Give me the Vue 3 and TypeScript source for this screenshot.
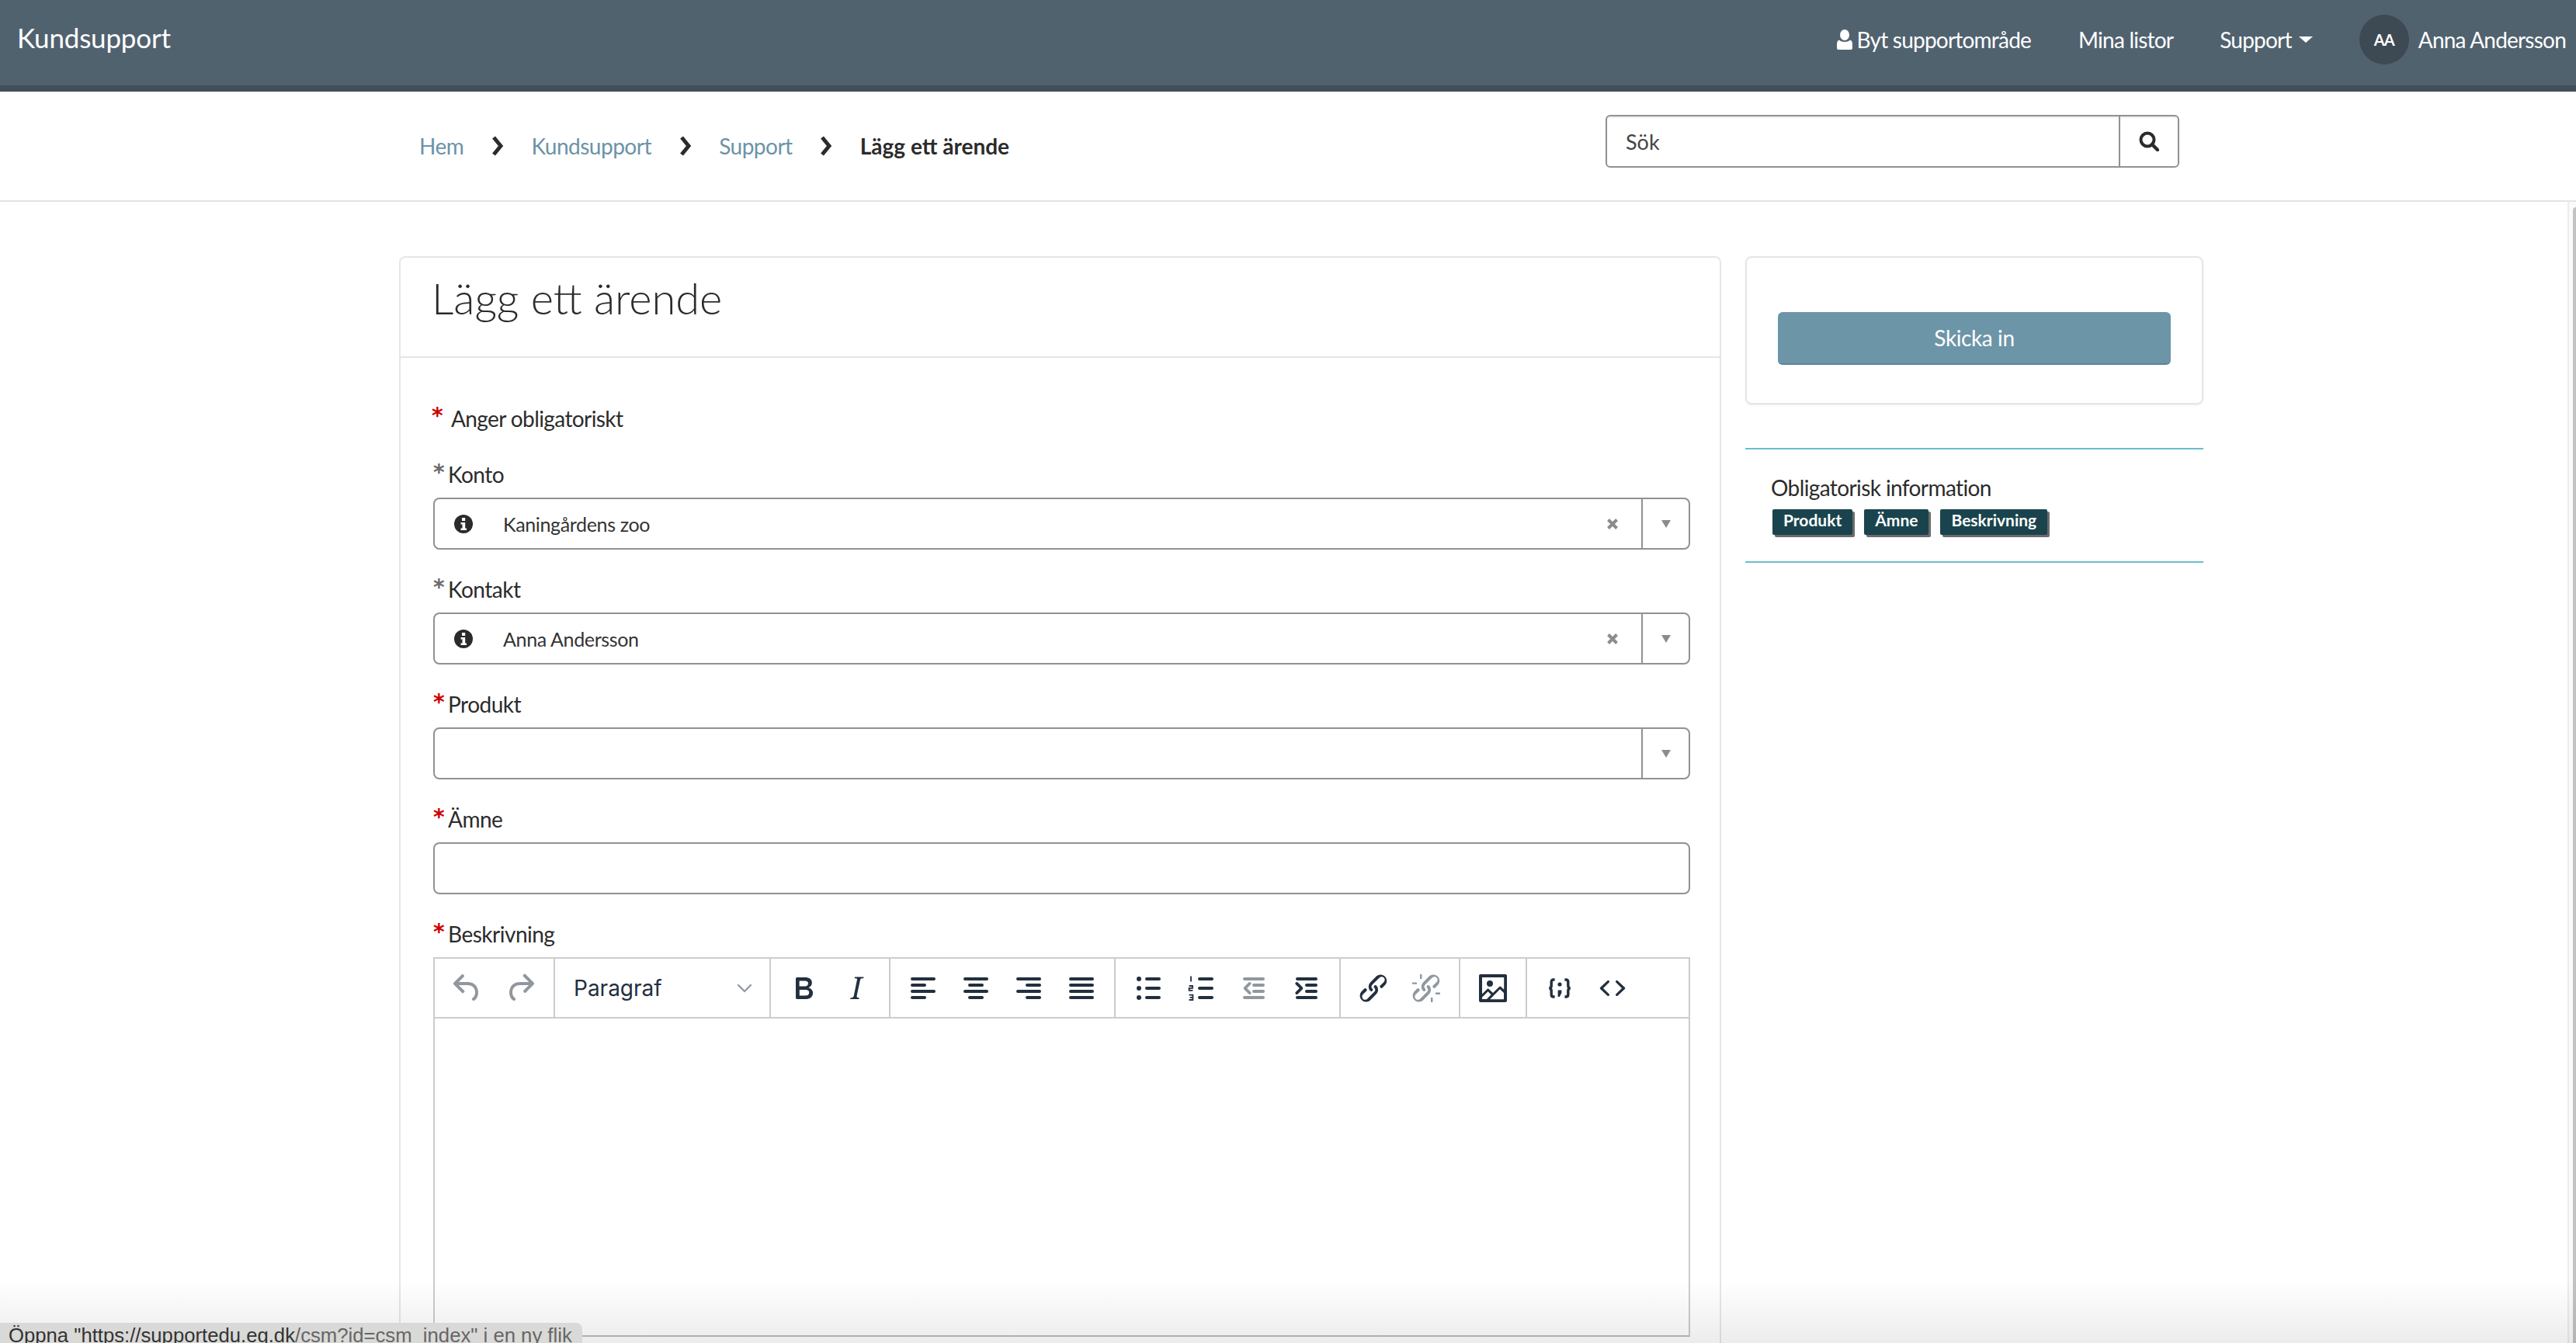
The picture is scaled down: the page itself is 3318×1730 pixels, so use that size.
<script setup lang="ts">
interface Icon { d?: string; muted?: boolean; kind?: string }
const bar = (x: number, y: number, w: number) => `M${x + 1} ${y}h${w - 2}a1 1 0 0 1 0 2H${x + 1}a1 1 0 0 1 0-2z`
const dot = (x: number, y: number) => `M${x} ${y}a1.5 1.5 0 1 1 3 0a1.5 1.5 0 1 1-3 0z`
const undo = 'M6.4 8H12c3.7 0 6.2 2 6.8 5.1.6 2.7-.4 5.6-2.3 6.8a1 1 0 0 1-1-1.8c1.1-.6 1.8-2.7 1.4-4.6-.5-2.1-2.1-3.5-4.9-3.5H6.4l3.3 3.3a1 1 0 1 1-1.4 1.4l-5-5a1 1 0 0 1 0-1.4l5-5a1 1 0 0 1 1.4 1.4L6.4 8z'
const redo = 'M17.6 10H12c-2.8 0-4.4 1.4-4.9 3.5-.4 2 .3 4 1.4 4.6a1 1 0 1 1-1 1.8c-2-1.2-2.9-4.1-2.3-6.8.6-3 3-5.1 6.8-5.1h5.6l-3.3-3.3a1 1 0 1 1 1.4-1.4l5 5a1 1 0 0 1 0 1.4l-5 5a1 1 0 0 1-1.4-1.4l3.3-3.3z'
const bold = 'M7.8 19c-.3 0-.5 0-.6-.2l-.2-.5V5.7c0-.2 0-.4.2-.5l.6-.2h5c1.5 0 2.7.3 3.5 1 .7.6 1.1 1.4 1.1 2.5a3 3 0 0 1-.6 1.9c-.4.6-1 1-1.6 1.2.4.1.9.3 1.3.6s.8.7 1 1.2c.4.4.5 1 .5 1.6 0 1.3-.4 2.3-1.3 3-.8.7-2.1 1-3.8 1H7.8zm5-8.3c.6 0 1.2-.1 1.6-.5.4-.3.6-.7.6-1.3 0-1.1-.8-1.7-2.3-1.7H9.3v3.5h3.4zm.5 6c.7 0 1.3-.1 1.7-.4.4-.4.6-.9.6-1.5s-.2-1-.7-1.4c-.4-.3-1-.4-2-.4H9.4v3.8h4z'
const italic = 'M16.7 4.7l-.1.9h-.3c-.6 0-1 0-1.4.3-.3.3-.4.6-.5 1.1l-2.1 9.8v.6c0 .5.4.8 1.4.8h.2l-.2.8H8l.2-.8h.2c1.1 0 1.8-.5 2-1.5l2-9.8.1-.5c0-.6-.4-.8-1.4-.8h-.3l.2-.9h5.8z'
const link = 'M6.2 12.3a1 1 0 0 1 1.4 1.4l-2.1 2.1a2 2 0 1 0 2.8 2.8l4.2-4.2a2 2 0 0 0 0-2.8 1 1 0 0 1 1.4-1.4 4 4 0 0 1 0 5.6l-4.2 4.2a4 4 0 0 1-5.6-5.6l2-2.1zm11.6-.6a1 1 0 0 1-1.4-1.4l2.1-2.1a2 2 0 1 0-2.8-2.8L11.4 9.6a2 2 0 0 0 0 2.8 1 1 0 0 1-1.4 1.4 4 4 0 0 1 0-5.6l4.2-4.2a4 4 0 0 1 5.6 5.6l-2 2.1z'
const unlinkTicks = 'M8 3v3h1.2V3zM3 8.2v1.2h3V8.2zM15 18v3h1.2v-3zM18 14.8V16h3v-1.2z'
const image = 'M5 15.7l3.3-3.2c.3-.3.7-.3 1 0L12 15l4.1-4c.3-.4.8-.4 1 0l2 1.9V5H5v10.7zM5 18V19h3l2.8-2.9-2-2L5 17.9zm14-3l-2.5-2.4-6.4 6.5H19v-4zM4 3h16c.6 0 1 .4 1 1v16c0 .6-.4 1-1 1H4a1 1 0 0 1-1-1V4c0-.6.4-1 1-1zm6 8a2 2 0 1 0 0-4 2 2 0 0 0 0 4z'
const source = 'M9.8 15.7c.3.3.3.8 0 1-.3.4-.9.4-1.2 0l-4.4-4.1a.8.8 0 0 1 0-1.2l4.4-4.2c.3-.3.9-.3 1.2 0 .3.3.3.8 0 1.1L6 12l3.8 3.7zm4.4 0c-.3.3-.3.8 0 1 .3.4.9.4 1.2 0l4.4-4.1a.8.8 0 0 0 0-1.2l-4.4-4.2a.8.8 0 0 0-1.2 0c-.3.3-.3.8 0 1.1L18 12l-3.8 3.7z'

const alignLeft = bar(4, 5, 16) + bar(4, 9, 10) + bar(4, 13, 16) + bar(4, 17, 10)
const alignCenter = bar(4, 5, 16) + bar(7, 9, 10) + bar(4, 13, 16) + bar(7, 17, 10)
const alignRight = bar(4, 5, 16) + bar(10, 9, 10) + bar(4, 13, 16) + bar(10, 17, 10)
const justify = bar(4, 5, 16) + bar(4, 9, 16) + bar(4, 13, 16) + bar(4, 17, 16)
const bullets = bar(10, 5, 10) + bar(10, 11, 10) + bar(10, 17, 10) + dot(4.5, 6) + dot(4.5, 12) + dot(4.5, 18)
const numbers = bar(10, 5, 10) + bar(10, 11, 10) + bar(10, 17, 10)
const outdent = bar(5, 5, 14) + bar(11, 9, 8) + bar(11, 13, 8) + bar(5, 17, 14) + 'M8.7 8.3a.9.9 0 0 1 1.3 1.3L7.6 12l2.4 2.4a.9.9 0 0 1-1.3 1.3l-3-3a1 1 0 0 1 0-1.4z'
const indent = bar(5, 5, 14) + bar(11, 9, 8) + bar(11, 13, 8) + bar(5, 17, 14) + 'M6.3 8.3a.9.9 0 0 0-1.3 1.3L7.4 12 5 14.4a.9.9 0 0 0 1.3 1.3l3-3a1 1 0 0 0 0-1.4z'

const groups: { pad: string; icons: Icon[] }[] = [
  { pad: 'first', icons: [{ d: undo, muted: true }, { d: redo, muted: true }] },
  { pad: 'format', icons: [] },
  { pad: 'std', icons: [{ d: bold }, { d: italic }] },
  { pad: 'std', icons: [{ d: alignLeft }, { d: alignCenter }, { d: alignRight }, { d: justify }] },
  { pad: 'std', icons: [{ d: bullets }, { d: numbers, kind: 'num' }, { d: outdent, muted: true }, { d: indent }] },
  { pad: 'std', icons: [{ d: link }, { d: link + unlinkTicks, muted: true }] },
  { pad: 'std', icons: [{ d: image }] },
  { pad: 'last', icons: [{ kind: 'code' }, { d: source }] },
]
const crumbs = ['Hem', 'Kundsupport', 'Support']
const fields = [
  { label: 'Konto', value: 'Kaningårdens zoo', required: false, type: 'select' },
  { label: 'Kontakt', value: 'Anna Andersson', required: false, type: 'select' },
  { label: 'Produkt', value: '', required: true, type: 'select' },
  { label: 'Ämne', value: '', required: true, type: 'text' },
]
const badges = ['Produkt', 'Ämne', 'Beskrivning']
</script>

<template>
  <div class="page">
    <header class="topbar">
      <span class="brand">Kundsupport</span>
      <nav class="nav">
        <span class="nav-item switch">
          <svg class="user" viewBox="0 0 20 26" aria-hidden="true">
            <ellipse cx="10" cy="7" rx="6" ry="7" fill="#fff" />
            <path d="M3 13.5c2 1.8 4.2 2.5 7 2.5s5-.7 7-2.5c2 .6 3 2.400 3 5.500v5c0 1.200-.8 2-2 2H2c-1.200 0-2-.8-2-2v-5c0-3.100 1-4.900 3-5.500z" fill="#fff" />
          </svg>
          Byt supportområde
        </span>
        <span class="nav-item lists">Mina listor</span>
        <span class="nav-item support">Support<i class="nav-caret"></i></span>
        <span class="avatar">AA</span>
        <span class="nav-item name">Anna Andersson</span>
      </nav>
    </header>

    <div class="crumbbar">
      <ol class="crumbs">
        <template v-for="c in crumbs" :key="c">
          <li class="crumb-link">{{ c }}</li>
          <li class="chev">
            <svg width="16" height="26" viewBox="0 0 16 26" aria-hidden="true">
              <path d="M3 2l9 11-9 11" fill="none" stroke="#2b2b2b" stroke-width="5" />
            </svg>
          </li>
        </template>
        <li class="crumb-current">Lägg ett ärende</li>
      </ol>
      <div class="search">
        <span class="search-input">Sök</span>
        <span class="search-btn">
          <svg width="26" height="26" viewBox="0 0 26 26" aria-hidden="true">
            <circle cx="11" cy="11" r="8.500" fill="none" stroke="#2b2b2b" stroke-width="4" />
            <path d="M17 17l7 7" stroke="#2b2b2b" stroke-width="4.500" stroke-linecap="round" />
          </svg>
        </span>
      </div>
    </div>

    <div class="content">
      <main class="card">
        <h1 class="title">Lägg ett ärende</h1>
        <div class="form">
          <p class="hint"><span class="hint-star">*</span>Anger obligatoriskt</p>
          <div v-for="f in fields" :key="f.label" class="field">
            <label class="label"><span class="star" :class="{ red: f.required }">*</span>{{ f.label }}</label>
            <div class="box">
              <div class="box-main">
                <svg v-if="f.value" class="info" viewBox="0 0 24 24" aria-hidden="true">
                  <circle cx="12" cy="12" r="12" fill="#2b2b2b" />
                  <rect x="10" y="4" width="4.200" height="4" fill="#fff" />
                  <path d="M8.500 10h5.700v7.500H16V20H8.500v-2.500h2V12.500h-2z" fill="#fff" />
                </svg>
                <span class="value">{{ f.value }}</span>
                <svg v-if="f.value" class="clear" viewBox="0 0 16 16" aria-hidden="true">
                  <path d="M2.500 2.500l11 11M13.500 2.500l-11 11" stroke="#8c8c8c" stroke-width="4" />
                </svg>
              </div>
              <div v-if="f.type === 'select'" class="box-arrow"><i class="tri"></i></div>
            </div>
          </div>

          <div class="field-editor">
            <label class="label"><span class="star red">*</span>Beskrivning</label>
            <div class="editor">
              <div class="toolbar">
                <div v-for="(g, gi) in groups" :key="gi" class="tgroup" :class="g.pad">
                  <template v-if="g.pad === 'format'">
                    <span class="format-name">Paragraf</span>
                    <svg width="20" height="12" viewBox="0 0 20 12" aria-hidden="true">
                      <path d="M2 2l8 8 8-8" fill="none" stroke="#222f3e" stroke-opacity=".5" stroke-width="2.200" stroke-linecap="round" />
                    </svg>
                  </template>
                  <span v-for="(ic, ii) in g.icons" :key="ii" class="tbtn">
                    <svg width="48" height="48" viewBox="0 0 24 24" aria-hidden="true">
                      <path v-if="ic.d" :d="ic.d" fill="#222f3e" :fill-opacity="ic.muted ? 0.5 : 1" fill-rule="evenodd" />
                      <path v-if="ic.kind === 'num'" d="M5.500 4.200v3.600M4.300 10.500h2.200v1.400H4.300v1.500h2.400M4.300 16.300h2.400v3.200H4.300M4.800 17.900h1.900" fill="none" stroke="#222f3e" stroke-width=".9" />
                      <template v-if="ic.kind === 'code'">
                        <path d="M8.800 6.500H8c-.9 0-1.400.5-1.400 1.400v2.600c0 .8-.4 1.300-1.300 1.500.9.200 1.300.7 1.300 1.500v2.600c0 .9.500 1.400 1.400 1.400h.8M15.200 6.500h.8c.9 0 1.400.5 1.400 1.400v2.600c0 .8.400 1.300 1.300 1.500-.9.200-1.300.7-1.300 1.500v2.600c0 .9-.5 1.400-1.400 1.400h-.8" fill="none" stroke="#222f3e" stroke-width="1.700" />
                        <circle cx="12" cy="9.500" r="1.300" fill="#222f3e" />
                        <path d="M10.800 13.300h2.400v1.700l-1.300 2.500h-1.100z" fill="#222f3e" />
                      </template>
                    </svg>
                  </span>
                </div>
              </div>
              <div class="editor-body"></div>
            </div>
          </div>
        </div>
      </main>

      <aside class="side">
        <div class="submit-card">
          <button class="submit" type="button">Skicka in</button>
        </div>
        <div class="mandatory">
          <p class="mandatory-title">Obligatorisk information</p>
          <div class="badges">
            <span v-for="b in badges" :key="b" class="badge">{{ b }}</span>
          </div>
        </div>
      </aside>
    </div>

    <div class="scrollbar"><div class="thumb"></div></div>
    <div class="fade"></div>
    <div class="status">Öppna "https://supportedu.eg.dk<span class="status-dim">/csm?id=csm_index" i en ny flik</span></div>
  </div>
</template>

<style scoped>
.page {
  position: relative;
  height: 1730px;
  overflow: hidden;
  background: #fff;
  font-family: Lato, "Open Sans", sans-serif;
  color: #2b2b2b;
}
.topbar {
  height: 118px;
  box-sizing: border-box;
  border-bottom: 8px solid #414f5a;
  background: #51626f;
  display: flex;
  align-items: center;
  justify-content: space-between;
  padding: 0 13px 0 22px;
  color: #fff;
}
.brand { font-size: 35px; margin-top: -14px; letter-spacing: -.2px; }
.nav { display: flex; align-items: center; font-size: 28px; letter-spacing: -.78px; margin-top: -9px; }
.nav-item { display: flex; align-items: center; white-space: nowrap; }
.user { width: 20px; height: 26px; margin-right: 6px; }
.lists { margin-left: 61px; }
.support { margin-left: 60px; }
.nav-caret {
  display: block;
  margin-left: 9px;
  border-style: solid;
  border-width: 8px 9px 0;
  border-color: #fff transparent transparent;
}
.avatar {
  width: 64px;
  height: 64px;
  border-radius: 50%;
  background: #3d4a54;
  margin-left: 60px;
  margin-right: 12px;
  display: flex;
  align-items: center;
  justify-content: center;
  font-size: 20px;
  font-weight: 700;
}
.crumbbar {
  height: 142px;
  box-sizing: border-box;
  border-bottom: 2px solid #dee5e8;
  display: flex;
  justify-content: space-between;
  align-items: flex-start;
  padding: 30px 511px 0 540px;
}
.crumbs {
  list-style: none;
  display: flex;
  align-items: center;
  margin: 0;
  padding: 0;
  height: 80px;
  font-size: 28px;
}
.crumb-link { color: #6b93a7; letter-spacing: -.5px; }
.chev { display: flex; margin: 0 35.6px; }
.crumb-current { font-weight: 700; }
.search {
  width: 739px;
  height: 68px;
  box-sizing: border-box;
  border: 2px solid #919191;
  border-radius: 6px;
  display: flex;
  box-shadow: inset 0 2px 2px rgba(0, 0, 0, .07);
}
.search-input {
  flex: 1;
  padding-left: 24px;
  display: flex;
  align-items: center;
  font-size: 27px;
  color: #444;
}
.search-btn {
  width: 74px;
  border-left: 2px solid #919191;
  display: flex;
  align-items: center;
  justify-content: center;
}
.content {
  display: flex;
  gap: 31px;
  padding: 70px 0 0 514px;
}
.card {
  width: 1703px;
  flex: none;
  box-sizing: border-box;
  height: 1500px;
  border: 2px solid #e3e7e9;
  border-radius: 8px;
}
.title {
  margin: 0;
  height: 129px;
  box-sizing: border-box;
  padding: 16px 0 0 40px;
  border-bottom: 2px solid #e3e7e9;
  font-size: 56px;
  font-weight: 300;
  line-height: 72px;
}
.form { padding: 0 38px 0 42px; }
.hint {
  margin: 0;
  height: 136px;
  padding-top: 56px;
  box-sizing: border-box;
  font-size: 28px;
  letter-spacing: -.6px;
  line-height: 44px;
  display: flex;
}
.hint-star {
  font-family: "DejaVu Sans", sans-serif;
  color: #c00;
  font-weight: 700;
  font-size: 28px;
  line-height: 38px;
  width: 25px;
  margin-left: -2px;
}
.label {
  display: flex;
  height: 44px;
  font-size: 28px;
  letter-spacing: -.5px;
  line-height: 28px;
}
.star {
  font-family: "DejaVu Sans", sans-serif;
  color: #6b6b6b;
  font-weight: 700;
  font-size: 28px;
  line-height: 24px;
  width: 19px;
}
.star.red { color: #c00; }
.field { margin-bottom: 37px; }
.box {
  height: 67px;
  box-sizing: border-box;
  border: 2px solid #919191;
  border-radius: 8px;
  display: flex;
}
.box-main {
  flex: 1;
  display: flex;
  align-items: center;
  padding-left: 25px;
  padding-right: 29px;
}
.info { width: 24px; height: 24px; margin-right: 39px; }
.value { flex: 1; font-size: 25px; letter-spacing: -.35px; color: #333; }
.clear { width: 16px; height: 16px; }
.box-arrow {
  width: 59px;
  border-left: 2px solid #919191;
  display: flex;
  align-items: center;
  justify-content: center;
}
.tri {
  display: block;
  border-style: solid;
  border-width: 10px 6px 0;
  border-color: #8c8c8c transparent transparent;
}
.editor {
  height: 489px;
  box-sizing: border-box;
  border: 2px solid #ccc;
  border-bottom-color: #bbb;
  display: flex;
  flex-direction: column;
}
.toolbar {
  height: 77px;
  box-sizing: border-box;
  border-bottom: 2px solid #ccc;
  display: flex;
}
.tgroup {
  display: flex;
  align-items: center;
  box-sizing: content-box;
  border-right: 2px solid #ccc;
  padding: 0 8px;
}
.tgroup.first { padding: 0 9px 0 8px; }
.tgroup.format {
  width: 278px;
  box-sizing: border-box;
  padding: 0 22px 0 24px;
  justify-content: space-between;
}
.tgroup.last { border-right: none; }
.format-name { font-family: Inter, sans-serif; font-size: 28px; color: #222f3e; }
.tbtn {
  width: 68px;
  height: 68px;
  display: flex;
  align-items: center;
  justify-content: center;
}
.editor-body { flex: 1; }
.side { width: 590px; flex: none; }
.submit-card {
  box-sizing: border-box;
  height: 191px;
  border: 2px solid #e3e7e9;
  border-radius: 8px;
  box-shadow: 0 1px 2px rgba(0, 0, 0, .08);
  display: flex;
  align-items: center;
  padding: 20px 40px 0;
}
.submit {
  flex: 1;
  height: 68px;
  border: none;
  border-bottom: 2px solid #5c8598;
  border-radius: 6px;
  background: #6d95a8;
  color: #fff;
  font-family: inherit;
  font-size: 28px;
  letter-spacing: -.4px;
}
.mandatory {
  margin-top: 56px;
  height: 148px;
  box-sizing: border-box;
  border-top: 2px solid #6cbdcd;
  border-bottom: 2px solid #6cbdcd;
  padding: 29px 0 0 33px;
}
.mandatory-title { margin: 0; font-size: 28px; letter-spacing: -.6px; line-height: 40px; }
.badges { display: flex; gap: 15px; margin-top: 8px; margin-left: 2px; }
.badge {
  box-sizing: border-box;
  height: 33px;
  padding: 0 14px;
  background: #1a444d;
  color: #fff;
  font-size: 21px;
  font-weight: 700;
  line-height: 27px;
  box-shadow: 3px 3px 0 #6b6b6b;
  border-radius: 2px;
}
.scrollbar {
  position: absolute;
  top: 260px;
  right: 0;
  bottom: 0;
  width: 11px;
  box-sizing: border-box;
  border-left: 2px solid #ececec;
  background: #fafafa;
  padding: 7px 0 0 5px;
}
.thumb { height: 100%; background: #c2c2c2; border-radius: 4px 0 0 0; }
.fade {
  position: absolute;
  left: 0;
  right: 0;
  bottom: 0;
  height: 80px;
  background: linear-gradient(rgba(0, 0, 0, 0), rgba(0, 0, 0, .075));
  pointer-events: none;
}
.status {
  position: absolute;
  left: 0;
  bottom: 0;
  width: 750px;
  height: 26px;
  overflow: hidden;
  box-sizing: border-box;
  padding-left: 11px;
  background: #d9d9d7;
  border-radius: 0 8px 0 0;
  font-family: "Liberation Sans", sans-serif;
  font-size: 25.7px;
  line-height: 33px;
  white-space: nowrap;
  color: #333;
}
.status-dim { color: #666; }
</style>
